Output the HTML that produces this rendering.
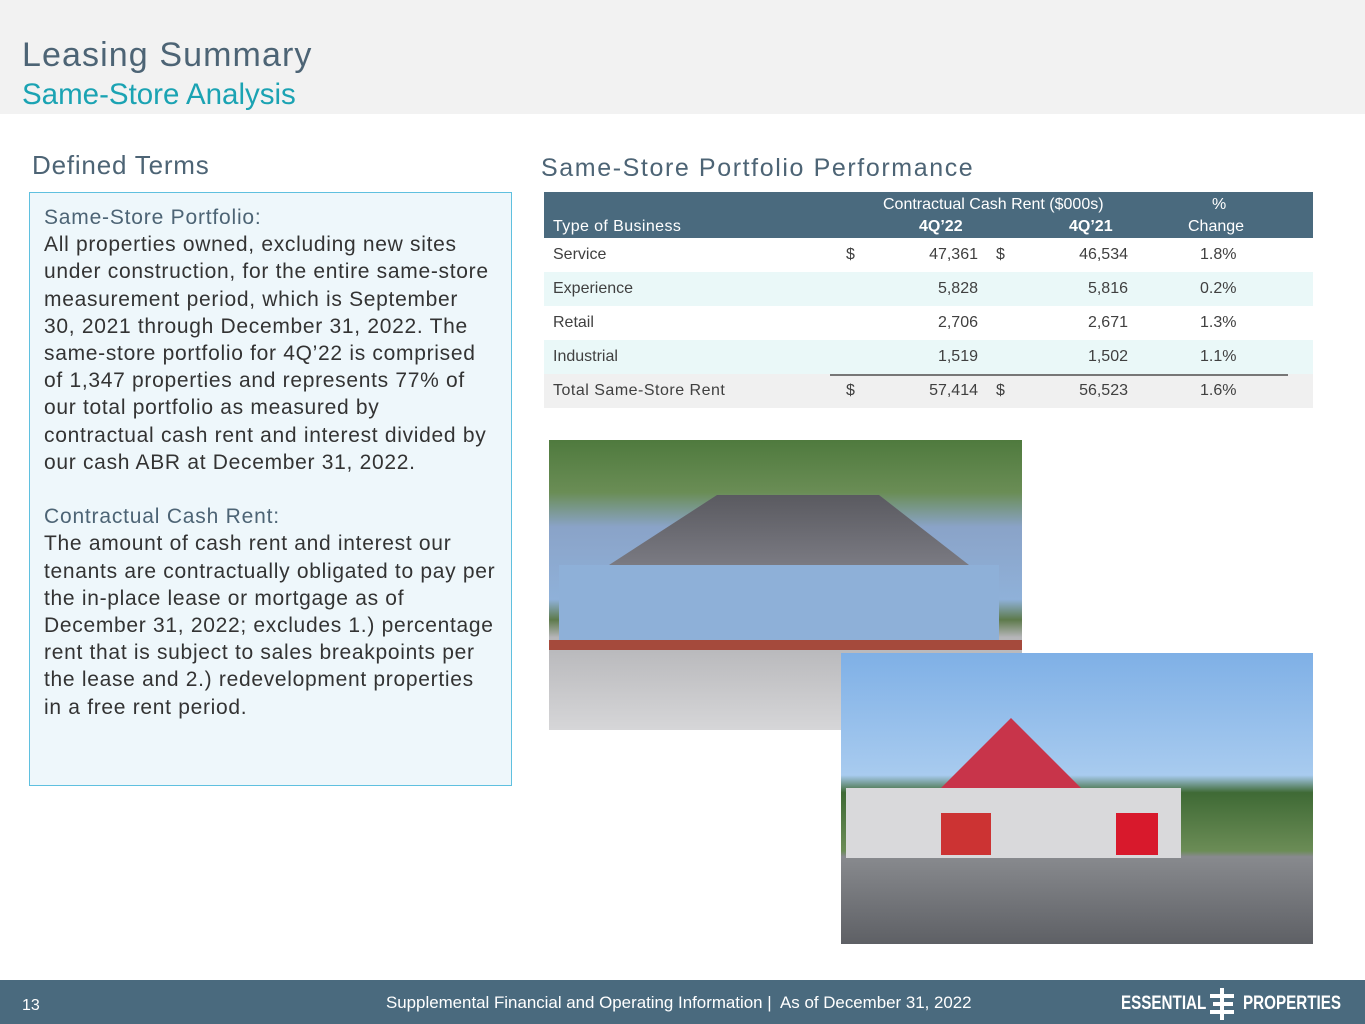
<!DOCTYPE html>
<html><head><style>
*{margin:0;padding:0;box-sizing:border-box}
body{width:1365px;height:1024px;position:relative;background:#fff;font-family:"Liberation Sans",sans-serif;overflow:hidden}
.a{position:absolute}
table{border-collapse:collapse;font-size:16px;color:#404040}
td{height:34px;padding:0}
</style></head><body>
<div class="a" style="left:0;top:0;width:1365px;height:114px;background:#f2f2f2"></div>
<div class="a" style="left:22px;top:36px;font-size:34px;color:#4d6475;letter-spacing:1.1px">Leasing Summary</div>
<div class="a" style="left:22px;top:78px;font-size:29.5px;color:#1ba3b3">Same-Store Analysis</div>
<div class="a" style="left:32px;top:150px;font-size:26px;color:#4d6475;letter-spacing:.8px">Defined Terms</div>
<div class="a" style="left:541px;top:154px;font-size:25px;color:#4d6475;letter-spacing:1.6px">Same-Store Portfolio Performance</div>
<div class="a" style="left:29px;top:192px;width:483px;height:594px;border:1px solid #5fc0df;background:#eef7fb;padding:11px 4px 9px 14px;font-size:21px;line-height:27.2px;color:#333;white-space:nowrap;letter-spacing:.7px">
<div style="color:#4d6475;letter-spacing:.8px">Same-Store Portfolio:</div>
All properties owned, excluding new sites<br>under construction, for the entire same-store<br>measurement period, which is September<br>30, 2021 through December 31, 2022. The<br>same-store portfolio for 4Q’22 is comprised<br>of 1,347 properties and represents 77% of<br>our total portfolio as measured by<br>contractual cash rent and interest divided by<br>our cash ABR at December 31, 2022.<br><br>
<div style="color:#4d6475;letter-spacing:.8px">Contractual Cash Rent:</div>
The amount of cash rent and interest our<br>tenants are contractually obligated to pay per<br>the in-place lease or mortgage as of<br>December 31, 2022; excludes 1.) percentage<br>rent that is subject to sales breakpoints per<br>the lease and 2.) redevelopment properties<br>in a free rent period.</div>

<div class="a" style="left:544px;top:192px;width:769px;height:46px;background:#4a6a7e;color:#fff;font-size:16px">
<div class="a" style="left:339px;top:4px">Contractual Cash Rent ($000s)</div>
<div class="a" style="left:668px;top:4px">%</div>
<div class="a" style="left:9px;top:26px;letter-spacing:.4px">Type of Business</div>
<div class="a" style="left:375px;top:26px;font-weight:bold">4Q’22</div>
<div class="a" style="left:525px;top:26px;font-weight:bold">4Q’21</div>
<div class="a" style="left:644px;top:26px">Change</div>
</div>
<table class="a" style="left:544px;top:238px;width:769px">
<tr><td style="padding-left:9px;width:302px">Service</td><td style="width:34px">$</td><td style="text-align:right;width:98px">47,361</td><td style="padding-left:18px;width:40px">$</td><td style="text-align:right;width:110px">46,534</td><td style="padding-left:72px">1.8%</td></tr>
<tr style="background:#eaf8f8"><td style="padding-left:9px">Experience</td><td></td><td style="text-align:right">5,828</td><td></td><td style="text-align:right">5,816</td><td style="padding-left:72px">0.2%</td></tr>
<tr><td style="padding-left:9px">Retail</td><td></td><td style="text-align:right">2,706</td><td></td><td style="text-align:right">2,671</td><td style="padding-left:72px">1.3%</td></tr>
<tr style="background:#eaf8f8"><td style="padding-left:9px">Industrial</td><td></td><td style="text-align:right">1,519</td><td></td><td style="text-align:right">1,502</td><td style="padding-left:72px">1.1%</td></tr>
<tr style="background:#f0f0f0"><td style="padding-left:9px;letter-spacing:.5px">Total Same-Store Rent</td><td>$</td><td style="text-align:right">57,414</td><td style="padding-left:18px">$</td><td style="text-align:right">56,523</td><td style="padding-left:72px">1.6%</td></tr>
</table>
<div class="a" style="left:830px;top:374px;width:458px;height:2px;background:#777"></div>

<div class="a" style="left:549px;top:440px;width:473px;height:290px;background:linear-gradient(#4f7a3e 0,#6a8d55 18%,#8aa3c8 30%,#8fb1d9 55%,#5d7a4b 62%,#b5b5b8 68%,#d6d6d8 100%)">
<div class="a" style="left:60px;top:55px;width:360px;height:70px;background:linear-gradient(#5a5a60,#7a7a82);clip-path:polygon(30% 0,75% 0,100% 100%,0 100%)"></div>
<div class="a" style="left:10px;top:125px;width:440px;height:75px;background:#8eb0d8"></div>
<div class="a" style="left:0;top:200px;width:473px;height:10px;background:#a54a3c"></div>
</div>
<div class="a" style="left:841px;top:653px;width:472px;height:291px;background:linear-gradient(#7fb0e6 0,#a8cbef 42%,#3f6a35 48%,#6b8c56 68%,#888a8e 70%,#5e6065 100%)">
<div class="a" style="left:95px;top:65px;width:150px;height:75px;background:#c8344a;clip-path:polygon(50% 0,100% 100%,0 100%)"></div>
<div class="a" style="left:5px;top:135px;width:335px;height:70px;background:#d9d9db"></div>
<div class="a" style="left:275px;top:160px;width:42px;height:42px;background:#d8192c"></div>
<div class="a" style="left:100px;top:160px;width:50px;height:42px;background:#c33"></div>
</div>

<div class="a" style="left:0;top:980px;width:1365px;height:44px;background:#4a6a7e;color:#fff">
<div class="a" style="left:22px;top:17px;font-size:16px">13</div>
<div class="a" style="left:386px;top:13px;font-size:16.9px">Supplemental Financial and Operating Information |&nbsp; As of December 31, 2022</div>
<div class="a" style="left:1121px;top:13px;font-size:19px;font-weight:bold;transform:scaleX(.8);transform-origin:left">ESSENTIAL</div>
<svg class="a" style="left:1208px;top:8px" width="30" height="32"><g fill="#fff"><rect x="12" y="0" width="4" height="32"/><rect x="2" y="6" width="24" height="4"/><rect x="5" y="14" width="20" height="4"/><rect x="2" y="22" width="24" height="4"/></g></svg>
<div class="a" style="left:1243px;top:13px;font-size:19px;font-weight:bold;transform:scaleX(.8);transform-origin:left">PROPERTIES</div>
</div>
</body></html>
